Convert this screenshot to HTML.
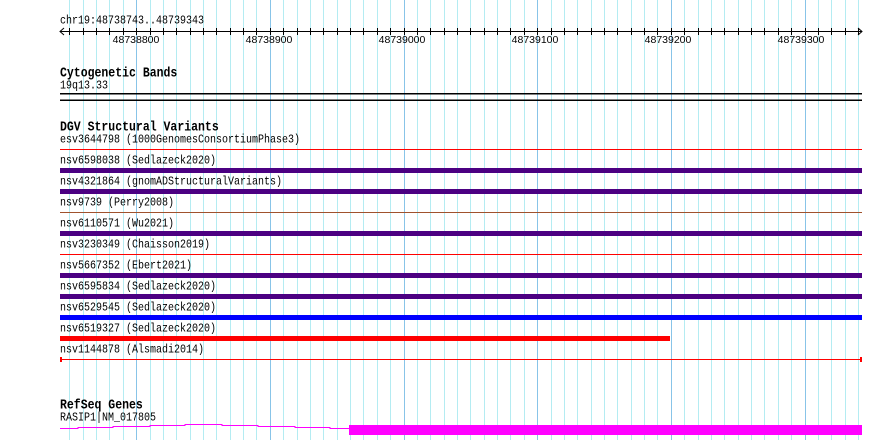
<!DOCTYPE html>
<html><head><meta charset="utf-8"><style>
body{margin:0;width:890px;height:440px;background:#fff;position:relative;overflow:hidden;font-family:"Liberation Mono",monospace;font-size:10px;color:#000}
.t{position:absolute;left:60px;white-space:pre;line-height:11px;transform:scaleY(1.2);transform-origin:0 0}
.h{font-weight:bold;font-size:11.5px}
.r{position:absolute;font-family:"Liberation Sans",sans-serif;font-size:10.5px;transform:translateX(-50%);top:34px}
svg{position:absolute;left:0;top:0}
</style></head><body>
<svg width="890" height="440">
<g id="grid"></g>
</svg>
<svg width="890" height="440">
<g id="tk"></g>
<line x1="60" y1="31.5" x2="862" y2="31.5" stroke="#000"/>
<polyline points="64,28 60,31.5 64,35" fill="none" stroke="#000"/>
<polyline points="858,28 862,31.5 858,35" fill="none" stroke="#000"/>
<rect x="60" y="93" width="802" height="1.5" fill="#000"/>
<rect x="60" y="99.5" width="802" height="1.5" fill="#000"/>
<rect x="60" y="149" width="802" height="1" fill="#f00"/>
<rect x="60" y="168" width="802" height="5" fill="#4b0082"/>
<rect x="60" y="189" width="802" height="5" fill="#4b0082"/>
<rect x="60" y="212" width="802" height="1" fill="#a0522d"/>
<rect x="60" y="231" width="802" height="5" fill="#4b0082"/>
<rect x="60" y="254" width="802" height="1" fill="#f00"/>
<rect x="60" y="273" width="802" height="5" fill="#4b0082"/>
<rect x="60" y="294" width="802" height="5" fill="#4b0082"/>
<rect x="60" y="315" width="802" height="5" fill="#0000ff"/>
<rect x="60" y="336" width="610" height="5" fill="#f00"/>
<rect x="60" y="359" width="802" height="1" fill="#f00"/>
<rect x="60" y="357" width="2" height="5" fill="#f00"/>
<rect x="860" y="357" width="2" height="5" fill="#f00"/>
<polyline points="60,428.5 78,428.5 78,427.5 113,427.5 113,426.5 150,426.5 150,425.5 185,425.5 185,424.5 222,424.5 222,425.5 258,425.5 258,426.5 295,426.5 295,427.5 330,427.5 330,428.5 349,428.5" fill="none" stroke="#f0f" stroke-width="1"/>
<rect x="349" y="425" width="513" height="10" fill="#f0f"/>
</svg>
<script>
var s='';
for(var bp=48738750;bp<=48739340;bp+=10){var x=Math.round(60+(bp-48738743)*802/600)+0.5;var maj=bp%100==0;s+='<line x1="'+x+'" y1="0" x2="'+x+'" y2="440" stroke="'+(maj?'#88c4e8':'#b4ecf2')+'" stroke-width="1"/>';}
document.getElementById('grid').innerHTML=s;
var t='';
for(var bp=48738750;bp<=48739340;bp+=10){var x=Math.round(60+(bp-48738743)*802/600)+0.5;t+='<line x1="'+x+'" y1="28" x2="'+x+'" y2="35" stroke="#000"/>';}
document.getElementById('tk').innerHTML=t;
</script>
<div class="t" style="top:15px">chr19:48738743..48739343</div>
<div class="r" style="left:136px">48738800</div>
<div class="r" style="left:269px">48738900</div>
<div class="r" style="left:402px">48739000</div>
<div class="r" style="left:535px">48739100</div>
<div class="r" style="left:668px">48739200</div>
<div class="r" style="left:801px">48739300</div>
<div class="t h" style="top:67px">Cytogenetic Bands</div>
<div class="t" style="top:80px">19q13.33</div>
<div class="t h" style="top:121px">DGV Structural Variants</div>
<div class="t" style="top:134px">esv3644798 (1000GenomesConsortiumPhase3)</div>
<div class="t" style="top:155px">nsv6598038 (Sedlazeck2020)</div>
<div class="t" style="top:176px">nsv4321864 (gnomADStructuralVariants)</div>
<div class="t" style="top:197px">nsv9739 (Perry2008)</div>
<div class="t" style="top:218px">nsv6110571 (Wu2021)</div>
<div class="t" style="top:239px">nsv3230349 (Chaisson2019)</div>
<div class="t" style="top:260px">nsv5667352 (Ebert2021)</div>
<div class="t" style="top:281px">nsv6595834 (Sedlazeck2020)</div>
<div class="t" style="top:302px">nsv6529545 (Sedlazeck2020)</div>
<div class="t" style="top:323px">nsv6519327 (Sedlazeck2020)</div>
<div class="t" style="top:344px">nsv1144878 (Alsmadi2014)</div>
<div class="t h" style="top:399px">RefSeq Genes</div>
<div class="t" style="top:412px">RASIP1|NM_017805</div>
</body></html>
